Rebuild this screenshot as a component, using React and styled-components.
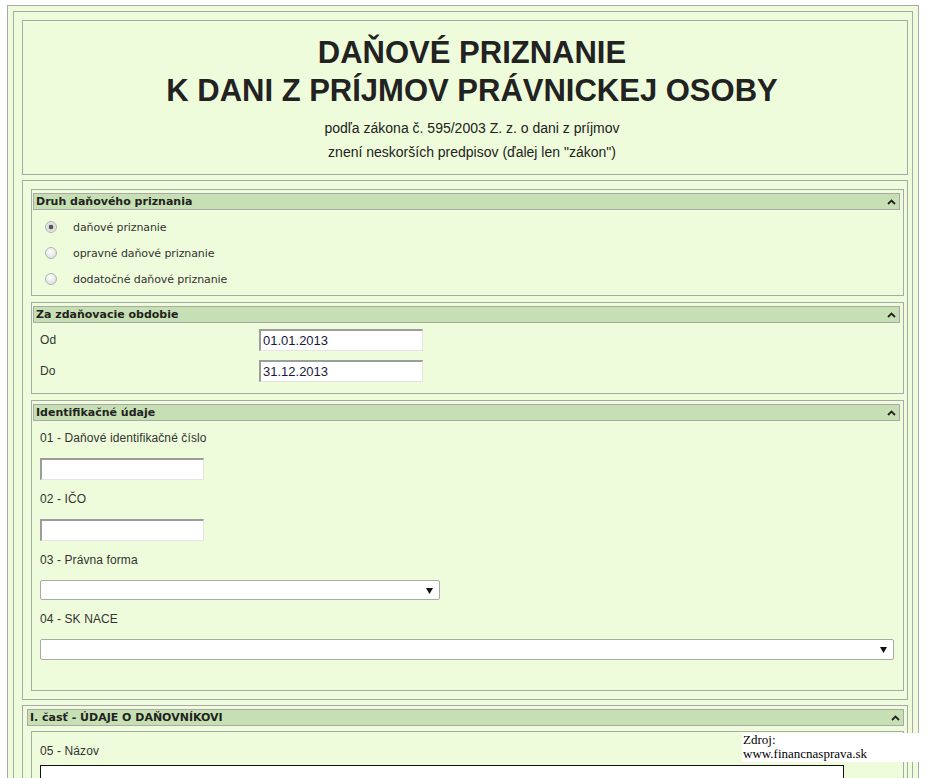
import React from "react";
import styled, { createGlobalStyle } from "styled-components";

const GlobalStyle = createGlobalStyle`
  html, body { margin: 0; padding: 0; background: #ffffff; }
  body { padding: 5px 0 0 7px; font-family: "Liberation Sans", Arial, sans-serif; color: #222; }
  * { box-sizing: border-box; }
`;

const GREEN = "#eefcdb";
const BAR = "#c6e0b4";
const LINE = "#a9a9a9";

const Outer = styled.div`
  width: 912px;
  border: 1px solid ${LINE};
  background: ${GREEN};
  padding: 5px;
  height: 790px;
`;

const Frame = styled.div`
  border: 1px solid ${LINE};
  padding: 8px 4px 0 8px;
  display: flex;
  flex-direction: column;
  gap: 5px;
  height: 800px;
`;

const HeaderBox = styled.header`
  border: 1px solid ${LINE};
  padding: 13px 0 10px 14px;
  text-align: center;
`;

const Title = styled.h1`
  margin: 0;
  font-family: "Liberation Sans", Arial, sans-serif;
  font-size: 31px;
  line-height: 38px;
  font-weight: bold;
  color: #222;
`;

const Sub = styled.p`
  margin: 0;
  font-size: 14px;
  line-height: 24px;
  color: #222;
  &:first-of-type { margin-top: 6px; }
`;

const Container = styled.div`
  border: 1px solid ${LINE};
  padding: ${(p) => p.$pad || "8px 3px 8px 8px"};
  display: flex;
  flex-direction: column;
  gap: ${(p) => p.$gap || "6px"};
`;

const Section = styled.section`
  border: 1px solid ${LINE};
`;

const Bar = styled.div`
  margin: ${(p) => p.$margin || "3px 3px 0 1px"};
  height: 17px;
  border: 1px solid ${LINE};
  background: ${BAR};
  display: flex;
  align-items: center;
  justify-content: space-between;
  padding: 0 3px 0 2px;
  font-family: "DejaVu Sans", Verdana, sans-serif;
  font-weight: bold;
  font-size: 11px;
  color: #222;
`;

const Caret = () => (
  <svg width="9" height="6" viewBox="0 0 9 6">
    <polyline points="1,5 4.5,1.5 8,5" fill="none" stroke="#222" strokeWidth="1.8" />
  </svg>
);

const RadioList = styled.div`
  padding: 4px 0 3px 13px;
`;

const RadioRow = styled.label`
  display: flex;
  align-items: center;
  height: 26px;
  gap: 16px;
  font-family: "DejaVu Sans", Verdana, sans-serif;
  font-size: 11px;
  letter-spacing: -0.1px;
  color: #333;
`;

const RadioDot = styled.span`
  width: 12px;
  height: 12px;
  border-radius: 50%;
  border: 1px solid #b4b4b4;
  background: ${(p) =>
    p.$checked
      ? "radial-gradient(circle at 50% 50%, #555 0, #555 2px, #d8d8d8 2.6px, #f4f4f4 100%)"
      : "radial-gradient(circle at 40% 35%, #ffffff 0, #e2e2e2 70%, #cfcfcf 100%)"};
`;

const PeriodGrid = styled.div`
  display: grid;
  grid-template-columns: 219px 164px;
  row-gap: 9px;
  align-items: center;
  padding: 6px 0 11px 8px;
`;

const Label = styled.div`
  font-family: "Liberation Sans", Arial, sans-serif;
  font-size: 12px;
  letter-spacing: 0.1px;
  line-height: 20px;
  color: #333;
`;

const TextInput = styled.input`
  width: ${(p) => p.$w || "164px"};
  height: 22px;
  margin: 0;
  padding: 0 2px;
  border-style: solid;
  border-width: 2px 1px 1px 2px;
  border-color: #9c9c9c #e4e4e4 #e4e4e4 #9c9c9c;
  background: #fff;
  font-family: "Liberation Sans", Arial, sans-serif;
  font-size: 13px;
  color: #1a1a3a;
  outline: none;
`;

const FieldStack = styled.div`
  display: flex;
  flex-direction: column;
  padding: 7px 0 30px 8px;
`;

const Field = styled.div`
  display: flex;
  flex-direction: column;
  gap: 10px;
  margin-bottom: 9px;
  &:last-child { margin-bottom: 0; }
`;

const SelectBox = styled.div`
  width: ${(p) => p.$w};
  height: ${(p) => p.$h || "20px"};
  border: 1px solid #a9a9a9;
  border-radius: 2px;
  background: #fff;
  display: flex;
  align-items: center;
  justify-content: flex-end;
  padding-right: 6px;
`;

const Arrow = () => (
  <svg width="7" height="7" viewBox="0 0 7 7">
    <polygon points="0,1 7,1 3.5,7" fill="#111" />
  </svg>
);

const PartContent = styled.div`
  margin: 5px 0 0 4px;
  border: 1px solid ${LINE};
  padding: 9px 0 0 8px;
  height: 80px;
`;

const NameInput = styled.div`
  margin-top: 4px;
  width: 804px;
  height: 30px;
  border: 1px solid #111;
  background: #fff;
`;

const Source = styled.div`
  position: absolute;
  left: 742px;
  top: 733px;
  width: 178px;
  height: 29px;
  background: #fff;
  padding: 0 0 0 1px;
  font-family: "Liberation Serif", "Times New Roman", serif;
  font-size: 13px;
  line-height: 14px;
  color: #000;
`;

const Page = styled.div`
  height: 773px;
  overflow: hidden;
`;

export default function App() {
  return (
    <>
      <GlobalStyle />
      <Page>
        <Outer>
          <Frame>
            <HeaderBox>
              <Title>
                DAŇOVÉ PRIZNANIE
                <br />
                K DANI Z PRÍJMOV PRÁVNICKEJ OSOBY
              </Title>
              <Sub>podľa zákona č. 595/2003 Z. z. o dani z príjmov</Sub>
              <Sub>znení neskorších predpisov (ďalej len "zákon")</Sub>
            </HeaderBox>

            <Container>
              <Section>
                <Bar>
                  <span>Druh daňového priznania</span>
                  <Caret />
                </Bar>
                <RadioList>
                  <RadioRow>
                    <RadioDot $checked />
                    daňové priznanie
                  </RadioRow>
                  <RadioRow>
                    <RadioDot />
                    opravné daňové priznanie
                  </RadioRow>
                  <RadioRow>
                    <RadioDot />
                    dodatočné daňové priznanie
                  </RadioRow>
                </RadioList>
              </Section>

              <Section>
                <Bar>
                  <span>Za zdaňovacie obdobie</span>
                  <Caret />
                </Bar>
                <PeriodGrid>
                  <Label>Od</Label>
                  <TextInput defaultValue="01.01.2013" />
                  <Label>Do</Label>
                  <TextInput defaultValue="31.12.2013" />
                </PeriodGrid>
              </Section>

              <Section>
                <Bar>
                  <span>Identifikačné údaje</span>
                  <Caret />
                </Bar>
                <FieldStack>
                  <Field>
                    <Label>01 - Daňové identifikačné číslo</Label>
                    <TextInput />
                  </Field>
                  <Field>
                    <Label>02 - IČO</Label>
                    <TextInput />
                  </Field>
                  <Field>
                    <Label>03 - Právna forma</Label>
                    <SelectBox $w="400px">
                      <Arrow />
                    </SelectBox>
                  </Field>
                  <Field>
                    <Label>04 - SK NACE</Label>
                    <SelectBox $w="854px" $h="21px">
                      <Arrow />
                    </SelectBox>
                  </Field>
                </FieldStack>
              </Section>
            </Container>

            <Container $pad="3px 3px 0 4px" $gap="0">
              <Bar $margin="0">
                <span>I. časť - ÚDAJE O DAŇOVNÍKOVI</span>
                <Caret />
              </Bar>
              <PartContent>
                <Label>05 - Názov</Label>
                <NameInput />
              </PartContent>
            </Container>
          </Frame>
        </Outer>
        <Source>
          Zdroj:
          <br />
          www.financnasprava.sk
        </Source>
      </Page>
    </>
  );
}
